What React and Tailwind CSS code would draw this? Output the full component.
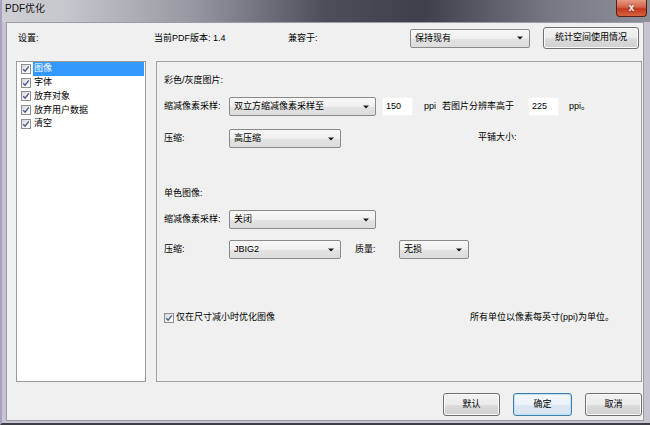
import React from "react";

const FONT = "font-['Liberation_Sans','Noto_Sans_CJK_SC',sans-serif]";

function Arrow() {
  return (
    <svg width="6" height="4" viewBox="0 0 6 4" className="shrink-0">
      <path d="M0 0.5 L6 0.5 L3 3.5 Z" fill="#1a1a1a" />
    </svg>
  );
}

function Select({ w, children }) {
  return (
    <div
      className={`${w} h-[19px] shrink-0 flex items-center justify-between pl-[4px] pr-[6px] border border-[#8a8a8a] rounded-[2px] bg-[linear-gradient(to_bottom,#f8f8f8_0%,#efefef_50%,#e3e3e3_51%,#dcdcdc_100%)] text-[9px] text-black`}
    >
      <span className="leading-none">{children}</span>
      <Arrow />
    </div>
  );
}

function Input({ children }) {
  return (
    <div className="w-[31px] h-[19px] shrink-0 bg-white border border-[#f4f4f4] flex items-center pl-[3px] text-[9px] text-black leading-none">
      {children}
    </div>
  );
}

function Check() {
  return (
    <div className="w-[10px] h-[10px] shrink-0 border border-[#8e8f8f] bg-[linear-gradient(135deg,#d6d6d6_0%,#f4f4f4_60%,#ffffff_100%)] flex items-center justify-center">
      <svg width="8" height="8" viewBox="0 0 8 8">
        <path d="M1.2 4.2 L3.1 6.2 L6.8 1.4" fill="none" stroke="#4b5e8e" strokeWidth="1.4" />
      </svg>
    </div>
  );
}

function Button({ w, focused, children }) {
  return (
    <div
      className={`${w} h-[23px] shrink-0 flex items-center justify-center rounded-[3px] border text-[9px] text-black ${
        focused
          ? "border-[#3c7fb1] bg-[linear-gradient(to_bottom,#f3f8fc_0%,#ebf3fa_50%,#dde9f4_51%,#d6e4f1_100%)] shadow-[inset_0_0_0_1px_#bfe0f6]"
          : "border-[#707070] bg-[linear-gradient(to_bottom,#f2f2f2_0%,#ebebeb_50%,#dddddd_51%,#cfcfcf_100%)] shadow-[inset_0_0_0_1px_#fafafa]"
      }`}
    >
      {children}
    </div>
  );
}

function Label({ w, children, className = "" }) {
  return (
    <div className={`${w} shrink-0 text-[9px] text-black leading-none ${className}`}>{children}</div>
  );
}

const items = ["图像", "字体", "放弃对象", "放弃用户数据", "清空"];

export default function App() {
  return (
    <div
      className={`${FONT} w-[650px] h-[425px] overflow-hidden flex flex-col bg-[#c6c5cf] border-l-2 border-l-[#ab9fc4] border-b-2 border-b-[#3e3e46]`}
    >
      {/* Title bar */}
      <div className="h-[22px] shrink-0 flex items-start justify-between bg-[linear-gradient(to_right,#cfd0d5_0%,#c6c7cd_10%,#9597a0_30%,#4c4e5a_50%,#3d3f4b_65%,#777983_85%,#8e9099_100%)] -ml-[2px]">
        <div className="pl-[5px] pt-[4px] text-[10px] text-[#111] leading-none">PDF优化</div>
        <div className="w-[31px] h-[17px] mr-[3px] rounded-b-[4px] border border-t-0 border-[#5a1f14] bg-[linear-gradient(to_bottom,#e69a82_0%,#d3624a_45%,#c2391f_55%,#d4623e_100%)] flex items-center justify-center">
          <span className="text-white text-[10px] font-bold leading-none [text-shadow:0_0_2px_#5a1f14]">x</span>
        </div>
      </div>

      {/* Body */}
      <div className="h-[399px] ml-[4px] mr-[6px] shrink-0 bg-[#f0f0f0] border border-[#9c9ca8] flex flex-col">
        {/* Top row */}
        <div className="mt-[4px] h-[22px] flex items-center pl-[11px]">
          <Label w="w-[136px]">设置:</Label>
          <Label w="w-[134px]">当前PDF版本: 1.4</Label>
          <Label w="w-[122px]">兼容于:</Label>
          <Select w="w-[120px]">保持现有</Select>
          <div className="ml-[13px]">
            <Button w="w-[96px] !h-[22px]">统计空间使用情况</Button>
          </div>
        </div>

        {/* Main area */}
        <div className="mt-[12px] h-[321px] flex pl-[9px] gap-[10px]">
          {/* List */}
          <div className="w-[130px] h-full bg-white border border-[#9a9a9a] flex flex-col pt-[0px]">
            {items.map((t, i) => (
              <div key={t} className="h-[13.75px] flex items-center pl-[4px] pr-[1px]">
                <Check />
                <div
                  className={`ml-[2px] flex-1 h-full flex items-center pl-[1px] text-[9px] leading-none ${
                    i === 0 ? "bg-[#3399ff] text-white" : "text-black"
                  }`}
                >
                  {t}
                </div>
              </div>
            ))}
          </div>

          {/* Right panel */}
          <div className="w-[486px] h-full border border-[#a0a0a0] flex flex-col pl-[7px]">
            <div className="mt-[12px] h-[13px] flex items-center">
              <Label w="w-auto">彩色/灰度图片:</Label>
            </div>

            <div className="mt-[10px] h-[19px] flex items-center">
              <Label w="w-[65px]">缩减像素采样:</Label>
              <Select w="w-[147px]">双立方缩减像素采样至</Select>
              <div className="ml-[6px]">
                <Input>150</Input>
              </div>
              <Label w="w-[18px]" className="ml-[11px]">ppi</Label>
              <Label w="w-[86px]">若图片分辨率高于</Label>
              <Input>225</Input>
              <Label w="w-auto" className="ml-[10px]">ppi。</Label>
            </div>

            <div className="mt-[13px] h-[19px] flex items-center">
              <Label w="w-[65px]">压缩:</Label>
              <Select w="w-[112px]">高压缩</Select>
              <Label w="w-auto" className="ml-[137px] -mt-[3px]">平铺大小:</Label>
            </div>

            <div className="mt-[39px] h-[13px] flex items-center">
              <Label w="w-auto">单色图像:</Label>
            </div>

            <div className="mt-[10px] h-[19px] flex items-center">
              <Label w="w-[65px]">缩减像素采样:</Label>
              <Select w="w-[147px]">关闭</Select>
            </div>

            <div className="mt-[11px] h-[19px] flex items-center">
              <Label w="w-[65px]">压缩:</Label>
              <Select w="w-[112px]">JBIG2</Select>
              <Label w="w-[44px]" className="ml-[14px]">质量:</Label>
              <Select w="w-[70px]">无损</Select>
            </div>

            <div className="mt-[52px] h-[13px] flex items-center">
              <div className="w-[306px] shrink-0 flex items-center">
                <Check />
                <Label w="w-auto" className="ml-[2px]">仅在尺寸减小时优化图像</Label>
              </div>
              <Label w="w-auto">所有单位以像素每英寸(ppi)为单位。</Label>
            </div>
          </div>
        </div>

        {/* Bottom buttons */}
        <div className="mt-[11px] flex justify-end pr-[1px] gap-[13px]">
          <Button w="w-[57px]">默认</Button>
          <Button w="w-[59px]" focused>确定</Button>
          <Button w="w-[57px]">取消</Button>
        </div>
      </div>
    </div>
  );
}
